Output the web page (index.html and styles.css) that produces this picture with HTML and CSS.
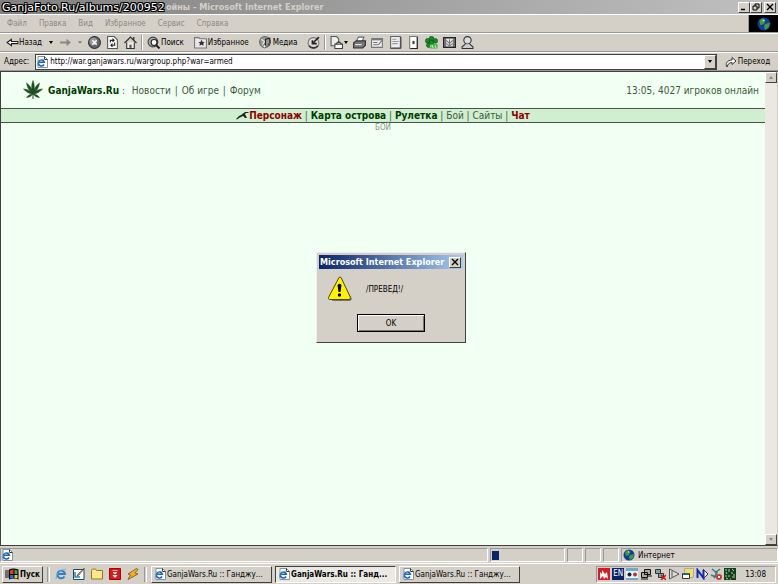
FILE: index.html
```html
<!DOCTYPE html>
<html lang="ru">
<head>
    <meta charset="UTF-8">
    <meta name="viewport" content="width=device-width, initial-scale=1.0">
    <title>GanjaWars.Ru</title>
    <link rel="stylesheet" href="styles.css">
</head>
<body>
    <svg class="sprites" aria-hidden="true">
        <symbol id="ie" viewBox="0 0 12 12">
            <path d="M2 .5h6.500l3 3v8h-9.500z" fill="#fff" stroke="#8a9299"/>
            <path d="M8.500.5v3h3" fill="none" stroke="#333"/>
            <path d="M8 8.500a3 3 0 1 1 .3-2.200H3" fill="none" stroke="#1a62b8" stroke-width="1.600"/>
            <path d="M1 9.500Q3 3 9 3" fill="none" stroke="#49a0dd" stroke-width=".8"/>
        </symbol>
        <symbol id="globe" viewBox="0 0 12 12">
            <circle cx="6" cy="6" r="5.500" fill="#123f91"/>
            <path d="M2 3l3-2 2 2-1 3-3 1zM7 6l4-1-1 4-3 2-1-3z" fill="#3f9d48"/>
            <path d="M5 2l2 1-2 1z" fill="#c6dc8c"/>
        </symbol>
    </svg>
    <header class="chrome">
        <div class="titlebar">
            <span class="stamp">GanjaFoto.Ru/albums/200952</span>
            <span class="title">ойны - Microsoft Internet Explorer</span>
            <div class="winbtns">
                <button aria-label="Свернуть"><svg viewBox="0 0 10 8"><path d="M2 6.500h4" stroke="#000" stroke-width="1.500"/></svg></button>
                <button aria-label="Восстановить"><svg viewBox="0 0 10 8"><path d="M4 3V1h4v4H6M2 3h4v4H2z" fill="none" stroke="#000"/></svg></button>
                <button class="gap" aria-label="Закрыть"><svg viewBox="0 0 10 8"><path d="M2 1l6 6M8 1L2 7" stroke="#000" stroke-width="1.400"/></svg></button>
            </div>
        </div>
        <div class="menurow">
            <nav class="menu">
                <a href="#">Файл</a>
                <a href="#">Правка</a>
                <a href="#">Вид</a>
                <a href="#">Избранное</a>
                <a href="#">Сервис</a>
                <a href="#">Справка</a>
            </nav>
            <div class="throbber"><svg viewBox="0 0 12 12"><use href="#globe"/></svg></div>
        </div>
        <div class="toolbar">
            <button class="back"><svg viewBox="0 0 12 12"><path d="M1 6l4-3v2h6v2H5v2z" fill="#fff" stroke="#222"/></svg>Назад<i class="arrow"></i></button>
            <button class="forward" aria-label="Вперед"><svg viewBox="0 0 12 12"><path d="M11 6L7 2.500V5H1v2h6v2.500z" fill="#888"/></svg><i class="arrow off"></i></button>
            <button class="stop" aria-label="Остановить"><svg viewBox="0 0 12 12"><circle cx="6" cy="6" r="5.500" fill="#666" stroke="#333"/><circle cx="5" cy="5" r="3.500" fill="#999"/><path d="M4 4l4 4M8 4L4 8" stroke="#fff" stroke-width="1.300"/></svg></button>
            <button class="refresh" aria-label="Обновить"><svg viewBox="0 0 12 12"><path d="M1.500.5h6l3 3v8h-9z" fill="#fff" stroke="#555"/><path d="M4 6V4h3M6 2.500L7.500 4 6 5.500M8 6v2.500H5M6 7L4.500 8.500 6 10" fill="none" stroke="#222"/></svg></button>
            <button class="home" aria-label="Домой"><svg viewBox="0 0 12 12"><path d="M2.500 6v5.500h7V6" fill="#eee" stroke="#333"/><path d="M.5 6.500L6 1l5.500 5.500M9 1v3" fill="none" stroke="#333" stroke-width="1.200"/><path d="M5 8h2v3H5z" fill="#555"/></svg></button>
            <span class="sep"></span>
            <button class="find"><svg viewBox="0 0 12 12"><circle cx="5.500" cy="5.500" r="4.500" fill="#aaa" stroke="#444"/><circle cx="6.500" cy="6" r="2.700" fill="#fff" stroke="#222"/><path d="M8.500 8.500l3 3" stroke="#222" stroke-width="1.800"/></svg>Поиск</button>
            <button class="fav"><svg viewBox="0 0 12 12"><path d="M.5 1.500h4l1 1h6v8.500H.5z" fill="#e8e8e8" stroke="#777"/><path d="M7 3.500l1 2h2l-1.500 1.500.5 2-2-1-2 1 .5-2L4 5.500h2z" fill="#333"/></svg>Избранное</button>
            <button class="media"><svg viewBox="0 0 12 12"><circle cx="5.500" cy="5.500" r="5" fill="#999" stroke="#666"/><path d="M2 3l3 2-2 4" stroke="#eee" fill="none"/><path d="M6 9V3l4-1v5" fill="none" stroke="#222"/><circle cx="5" cy="9.500" r="1.500" fill="#eee" stroke="#333" stroke-width=".6"/><circle cx="9" cy="8" r="1.300" fill="#555"/></svg>Медиа</button>
            <button class="history" aria-label="Журнал"><svg viewBox="0 0 12 12"><circle cx="6" cy="6.500" r="5" fill="#ddd" stroke="#777"/><path d="M5 4v3h4M11 1L6 6" stroke="#222" stroke-width="1.500" fill="none"/><path d="M2 9a5 5 0 0 0 8 0" stroke="#333" fill="none" stroke-width="1.500"/></svg></button>
            <span class="sep"></span>
            <button class="mail" aria-label="Почта"><svg viewBox="0 0 12 12"><path d="M1 .5h5l2 2V9H1z" fill="#eee" stroke="#555"/><path d="M4.500 7.500h7v4h-7zM5 7.500L8 5l3 2.500" fill="#fff" stroke="#444"/></svg><i class="arrow"></i></button>
            <button class="tool" aria-label="Печать"><svg viewBox="0 0 12 12"><path d="M3 5l2-4h5L8.500 5z" fill="#fff" stroke="#666"/><path d="M.5 6.500L3 4.500h8.500v4L9 11H.5z" fill="#777" stroke="#333"/><path d="M2 8h6" stroke="#eee"/></svg></button>
            <button class="tool" aria-label="Правка"><svg viewBox="0 0 12 12"><path d="M.5 2.500h10v8H.5z" fill="#eee" stroke="#777"/><path d="M1 3h10" stroke="#777" stroke-width="2"/><path d="M2 6h4M2 8h5M11 3L7 8" stroke="#777"/></svg></button>
            <button class="tool" aria-label="Обсуждение"><svg viewBox="0 0 12 12"><path d="M1.500.5h9v11h-9z" fill="#eee" stroke="#666"/><path d="M3 3h4M3 5h6M3 7h5" fill="none" stroke="#999"/><path d="M2 11h9V1" fill="none" stroke="#444"/></svg></button>
            <button class="tool" aria-label="Словарь"><svg viewBox="0 0 12 12"><path d="M2.500.5h7v11h-7z" fill="#fff" stroke="#777"/><path d="M9.500 1v10.500h-6" fill="none" stroke="#222"/><path d="M5 4.500h2v3H5z" fill="#444"/></svg></button>
            <button class="tool" aria-label="ICQ"><svg viewBox="0 0 12 12"><g fill="#168a25" stroke="#064b0c" stroke-width=".5"><circle cx="6" cy="2.500" r="2.200"/><circle cx="2.500" cy="4.500" r="2.200"/><circle cx="9.500" cy="4.500" r="2.200"/><circle cx="3.500" cy="8.500" r="2.200"/><circle cx="6" cy="6" r="2.200"/></g><path d="M4.500 7.500h7v4h-7z" fill="#3fae3a"/><path d="M5.500 8.500v2M7 8.500v2h1M9.500 8.500v2h1" stroke="#fff" stroke-width=".7" fill="none"/></svg></button>
            <button class="tool" aria-label="Справочник"><svg viewBox="0 0 12 12"><path d="M.5 1.500h11v9H.5z" fill="#777" stroke="#222"/><path d="M3 2.500h6v7H3z" fill="#eee"/><path d="M3 4l3 3 3-3M3 7l3 2 3-2M6 3v5" stroke="#777" fill="none"/></svg></button>
            <button class="tool" aria-label="Messenger"><svg viewBox="0 0 12 12"><circle cx="6" cy="4" r="3.400" fill="#ddd" stroke="#333"/><path d="M4 7.500L1 10v1.500h10V10L8 7.500" fill="#ccc" stroke="#333"/></svg></button>
        </div>
        <form class="address" onsubmit="return false">
            <label for="url">Адрес:</label>
            <div class="urlbox">
                <svg class="ic" viewBox="0 0 12 12"><use href="#ie"/></svg>
                <input id="url" type="text" value="http://war.ganjawars.ru/wargroup.php?war=armed">
                <button type="button" class="drop" aria-label="Список адресов"><i class="arrow"></i></button>
            </div>
            <button class="go"><svg viewBox="0 0 12 12"><path d="M2 11C0 8 2 4 7 4V1.500L11 5 7 8.500V6.500C4 6.500 3 8 2 11z" fill="#fff" stroke="#333"/></svg>Переход</button>
        </form>
    </header>
    <div class="view">
        <main class="page">
            <div class="head">
                <svg class="leaf" viewBox="0 0 20 20"><path d="M10 14C8 9 8.500 4 10 .5c1.500 3.500 2 8.500 0 13.500C6 11 4 7 3.500 3 7 5.500 9.500 9 10 14c.5-5 3-8.500 6.500-11C16 7 14 11 10 14 7 14 3 12 .5 9 4 9 8 11 10 14c2-3 6-5 9.500-5-2.500 3-6.500 5-9.500 5-2 2.500-4 3.500-6.500 3.500C5 15.500 7 14 10 14c3 0 5 1.500 6.500 3.500-2.500 0-4.500-1-6.500-3.500z" fill="#1d4f22" stroke="#1d4f22" stroke-width=".5"/><path d="M10 13v6" stroke="#1d4f22"/></svg>
                <div class="links"><a href="#"><b>GanjaWars.Ru</b></a> :&nbsp; <a href="#">Новости</a> | <a href="#">Об игре</a> | <a href="#">Форум</a></div>
                <div class="online">13:05, 4027 игроков онлайн</div>
            </div>
            <nav class="gamenav">
                <svg class="gun" viewBox="0 0 13 9"><path d="M0 8l3-3 2-1 4-3h4l-1 1h-2L9 3l2 4H9L7 5 5 6l-2 1-2 1.500z" fill="#1b2b1b"/></svg>
                <div><a class="red" href="#">Персонаж</a> | <a class="bold" href="#">Карта острова</a> | <a class="bold" href="#">Рулетка</a> | <a href="#">Бой</a> | <a href="#">Сайты</a> | <a class="red" href="#">Чат</a></div>
            </nav>
            <p class="battle">БОЙ</p>
        </main>
        <div class="scroll">
            <button aria-label="Вверх"><i class="arrow up off"></i></button>
            <button aria-label="Вниз"><i class="arrow off"></i></button>
        </div>
        <div class="dialog" role="alertdialog" aria-labelledby="dlg">
            <div class="dlgtitle"><span id="dlg">Microsoft Internet Explorer</span><button aria-label="Закрыть"><svg viewBox="0 0 10 8"><path d="M2 1l6 6M8 1L2 7" stroke="#000" stroke-width="1.400"/></svg></button></div>
            <div class="msg">
                <svg viewBox="0 0 26 26"><path d="M14 3l11 20-2 2H5z" fill="#77736e"/><path d="M12 1.500q1-1 2 0l9.500 20q0 2-1.500 2H2.500Q1 23 1.500 21.500z" fill="#fff200" stroke="#4d4a00"/><path d="M10.500 9q2-2.500 4 0l-1 7h-2z"/><circle cx="12.500" cy="19" r="1.700"/></svg>
                <span>/ПРЕВЕД!/</span>
            </div>
            <button class="ok">OK</button>
        </div>
    </div>
    <footer>
        <div class="status">
            <div class="cell main"><svg class="ic" viewBox="0 0 12 12"><use href="#ie"/></svg></div>
            <div class="cell progress"><i></i></div>
            <div class="cell small"></div>
            <div class="cell small"></div>
            <div class="cell small"></div>
            <div class="cell zone"><svg class="ic" viewBox="0 0 12 12"><use href="#globe"/></svg>Интернет</div>
        </div>
        <div class="taskbar">
            <button class="start"><svg viewBox="0 0 14 12"><path d="M0 3h2M0 5h2M0 7h2M0 9h2M3 2v8" stroke="#111"/><path d="M4 1.500q4-2 9.500 0v10q-5-2-9.500 0z"/><path d="M5 2.500q2-1 3.500-1V6H5z" fill="#e33"/><path d="M9.500 1.500l3 1V6h-3z" fill="#3a4"/><path d="M5 7h3.500v3L5 10.500z" fill="#36c"/><path d="M9.500 7h3v3.500l-3-.5z" fill="#ec3"/></svg>Пуск</button>
            <span class="grip"></span>
            <div class="quick">
                <button aria-label="Internet Explorer"><svg viewBox="0 0 12 12"><path d="M9.500 8.500a3.800 3.800 0 1 1 .5-2.500H3" fill="none" stroke="#2a82cb" stroke-width="2"/><path d="M1 11Q1 3 11 1" fill="none" stroke="#62b4e6"/></svg></button>
                <button aria-label="Рабочий стол"><svg viewBox="0 0 12 12"><path d="M.5 1.500h10.500v10H.5z" fill="#fff" stroke="#164b6c"/><path d="M2 4v5h5" fill="none" stroke="#2387b5" stroke-width="1.500"/><path d="M11.500 0L6 7l-2 1 1-2z" fill="#d8b34d" stroke="#333" stroke-width=".6"/></svg></button>
                <button aria-label="Папка"><svg viewBox="0 0 12 12"><path d="M.5 2.500L1.500 1h3l1 1.500h6v8.500H.5z" fill="#ffe787" stroke="#8b7a31"/></svg></button>
                <button aria-label="Загрузки"><svg viewBox="0 0 12 12"><path d="M.5.5h11v11H.5z" fill="#d81818" stroke="#a00"/><path d="M3.500 2.500h5M4 4.500h4L6 6zM4 7.500h4L6 9.500z" fill="#fff" stroke="#fff" stroke-width=".7"/></svg></button>
                <button aria-label="Winamp"><svg viewBox="0 0 12 12"><path d="M9.500.5L1 6l2.500 1L1 11.500 11 6 8 5l3-3.500z" fill="#f1ad25" stroke="#765011" stroke-width=".8"/></svg></button>
            </div>
            <span class="grip"></span>
            <div class="tasks">
                <button><svg class="ic" viewBox="0 0 12 12"><use href="#ie"/></svg>GanjaWars.Ru :: Ганджу...</button>
                <button class="active"><svg class="ic" viewBox="0 0 12 12"><use href="#ie"/></svg>GanjaWars.Ru :: Ганд...</button>
                <button><svg class="ic" viewBox="0 0 12 12"><use href="#ie"/></svg>GanjaWars.Ru :: Ганджу...</button>
            </div>
            <div class="tray">
                <svg viewBox="0 0 12 12"><path d="M0 0h12v12H0z" fill="#d51c22"/><path d="M2 11V4l2 2V2l3 4 2-2 1 7-2-2-2 2-1-3z" fill="#fff"/></svg>
                <span class="lang">EN</span>
                <svg viewBox="0 0 12 12"><path d="M0 0h12v12H0z" fill="#e8f3f8"/><path d="M0 0h12v3H0zM0 10h12v2H0z" fill="#72a9cf"/><circle cx="3.500" cy="6.500" r="2" fill="#124"/><circle cx="9" cy="6.500" r="2" fill="#b33"/></svg>
                <svg viewBox="0 0 12 12"><path d="M4.500 1.500h6v5h-6zM1.500 4.500h6v5h-6z" fill="#aaa" stroke="#111"/><path d="M1 11h7M8 8h4" stroke="#111"/></svg>
                <svg viewBox="0 0 12 12"><path d="M1.500 1.500h5v4h-5zM4.500 5.500h5v4h-5z" fill="#71a9a5" stroke="#333"/><path d="M7 7l5 5M12 7l-5 5" stroke="#d11" stroke-width="1.500"/></svg>
                <svg viewBox="0 0 12 12"><path d="M1.500 1l9.500 5-9.500 5zM4 3v6" fill="#ddd" stroke="#555"/></svg>
                <svg viewBox="0 0 12 12"><path d="M2.500.5h9v9h-9z" fill="#f7df52" stroke="#aaa"/><path d="M.5 5.500h7v5h-7z" fill="#fff" stroke="#333"/><path d="M1 6h6" stroke="#1763b8" stroke-width="2"/></svg>
                <svg viewBox="0 0 12 12"><path d="M7 1l5 5-5 5" fill="#eee" stroke="#333"/><path d="M1.500 10V2l6 8V2" fill="none" stroke="#1428b6" stroke-width="2"/></svg>
                <svg viewBox="0 0 12 12"><path d="M2 1l5 4-3 5M10 1L5 5M1 7l5 2" fill="none" stroke="#397a80" stroke-width="1.500"/><circle cx="9" cy="9" r="3" fill="#d43535"/><path d="M8 8l2 2M10 8l-2 2" stroke="#fff"/></svg>
                <svg viewBox="0 0 12 12"><path d="M0 0h12v12H0z" fill="#163d20"/><path d="M1 2h2M5 1v3M8 1l2 2M2 4l1 2M7 5h2M10 6v2M1 8h2M5 7v2M8 9h3M2 10l2 1M6 11h1" stroke="#8ee198"/></svg>
                <time>13:08</time>
            </div>
        </div>
    </footer>
</body>
</html>
```
FILE: styles.css
```css
* {
    box-sizing: border-box;
}
body {
    margin: 0;
    height: 100vh;
    display: flex;
    flex-direction: column;
    overflow: hidden;
    background: #d4d0c8;
    color: #000;
    font: 8px "DejaVu Sans Condensed", Tahoma, sans-serif;
}
a {
    color: inherit;
    text-decoration: none;
}
button {
    display: flex;
    align-items: center;
    justify-content: center;
    padding: 0;
    border: none;
    background: none;
    color: inherit;
    font: inherit;
    white-space: nowrap;
}
svg {
    display: block;
    width: 12px;
    height: 12px;
    flex: none;
}
.sprites {
    position: absolute;
    width: 0;
    height: 0;
}
.titlebar {
    height: 14px;
    display: flex;
    align-items: center;
    background: linear-gradient(90deg, #808080, #c0c0c0);
}
.stamp {
    padding-left: 2px;
    width: 166px;
    color: #fff;
    font: 11px "DejaVu Sans", Verdana, sans-serif;
    text-shadow: 1px 0 #000, -1px 0 #000, 0 1px #000, 0 -1px #000, 1px 1px #000, -1px -1px #000, 1px -1px #000, -1px 1px #000;
    white-space: nowrap;
}
.title {
    flex: 1;
    color: #d4d0c8;
    font-size: 9px;
    font-weight: bold;
}
.winbtns {
    display: flex;
    padding-right: 2px;
}
.winbtns button, .dlgtitle button, .scroll button, .drop {
    width: 12px;
    height: 11px;
    background: #d4d0c8;
    border: 1px solid;
    border-color: #fff #404040 #404040 #fff;
}
.winbtns svg, .dlgtitle svg {
    width: 10px;
    height: 8px;
}
.winbtns .gap {
    margin-left: 2px;
}
.menurow {
    height: 19px;
    display: flex;
    border-top: 1px solid #fff;
    border-bottom: 1px solid #999;
}
.menu {
    flex: 1;
    display: flex;
    align-items: center;
    gap: 12px;
    padding-left: 7px;
    color: #8d8982;
    border-right: 1px solid #999;
}
.throbber {
    width: 29px;
    display: flex;
    align-items: center;
    justify-content: center;
    background: #000;
}
.throbber svg {
    width: 14px;
    height: 14px;
}
.toolbar {
    height: 19px;
    display: flex;
    align-items: center;
    padding-left: 6px;
    border-top: 1px solid #fff;
    border-bottom: 1px solid #999;
}
.toolbar svg {
    width: 13px;
    height: 13px;
}
.arrow {
    border: 2px solid transparent;
    border-top: 3px solid #000;
    border-bottom: none;
}
.arrow.off {
    border-top-color: #888;
}
.arrow.up {
    border-top: none;
    border-bottom: 3px solid #888;
}
.back .arrow {
    margin-left: 7px;
}
.forward {
    margin-left: 6px;
    gap: 6px;
}
.stop {
    margin-left: 6px;
}
.refresh, .home {
    margin-left: 5px;
}
.sep {
    width: 2px;
    height: 15px;
    margin: 0 4px;
    border-left: 1px solid #999;
    border-right: 1px solid #fff;
}
.find, .fav, .media {
    gap: 1px;
}
.fav, .media, .history {
    margin-left: 10px;
}
.mail {
    gap: 1px;
}
.tool {
    margin-left: 5px;
}
.address {
    height: 19px;
    display: flex;
    align-items: center;
    padding-left: 4px;
    border-top: 1px solid #fff;
    border-bottom: 1px solid #999;
}
.urlbox {
    flex: 1;
    height: 16px;
    display: flex;
    align-items: center;
    margin-left: 6px;
    background: #fff;
    border: 1px solid #404040;
}
.urlbox input {
    flex: 1;
    min-width: 0;
    padding: 0 2px;
    border: none;
    outline: none;
    background: none;
    font: inherit;
}
.drop {
    height: 14px;
}
.go {
    width: 61px;
    gap: 1px;
}
.view {
    flex: 1;
    min-height: 0;
    position: relative;
    display: flex;
    border: 1px solid #404040;
    border-right: 1px solid #d4d0c8;
}
.page {
    flex: 1;
    background: #f2fff3;
    color: #3c5c3c;
    font: 10px "DejaVu Sans Condensed", Verdana, sans-serif;
}
.head {
    height: 36px;
    display: flex;
    align-items: center;
    padding: 0 6px 0 22px;
}
.leaf {
    width: 20px;
    height: 20px;
}
.links {
    flex: 1;
    margin-left: 5px;
}
.links a + a {
    padding: 0 1px;
}
.links b, .gamenav .bold {
    color: #003c00;
    font-weight: bold;
}
.gamenav {
    height: 15px;
    display: flex;
    align-items: center;
    justify-content: center;
    background: #d0eed0;
    border-top: 1px solid #445544;
    border-bottom: 1px solid #445544;
}
.gun {
    width: 13px;
    height: 9px;
}
.gamenav .red {
    color: #900000;
    font-weight: bold;
}
.battle {
    margin: 0;
    text-align: center;
    color: #8a988a;
    font-size: 8px;
    line-height: 10px;
}
.scroll {
    width: 12px;
    display: flex;
    flex-direction: column;
    justify-content: space-between;
    background: #eae8e3;
}
.dialog {
    position: absolute;
    left: 315px;
    top: 180px;
    width: 150px;
    height: 91px;
    padding: 2px;
    background: #d4d0c8;
    border: 1px solid;
    border-color: #eee #404040 #404040 #eee;
}
.dlgtitle {
    height: 14px;
    display: flex;
    align-items: center;
    justify-content: space-between;
    padding: 0 2px 0 1px;
    background: linear-gradient(90deg, #0a246a, #a6caf0);
    color: #fff;
    font-size: 9px;
    font-weight: bold;
    white-space: nowrap;
}
.msg {
    display: flex;
    align-items: center;
    gap: 13px;
    padding: 7px 8px;
}
.msg svg {
    width: 26px;
    height: 26px;
}
.ok {
    width: 68px;
    height: 18px;
    margin: 5px auto 0;
    border: 1px solid #000;
    box-shadow: inset 1px 1px #fff, inset -1px -1px #777;
}
.status {
    height: 17px;
    display: flex;
    gap: 2px;
    padding: 2px 0 1px;
}
.cell {
    display: flex;
    align-items: center;
    border: 1px solid;
    border-color: #999 #fff #fff #999;
}
.cell.main {
    flex: 1;
}
.progress {
    width: 75px;
    padding-left: 1px;
}
.progress i {
    width: 7px;
    height: 9px;
    background: #0a246a;
}
.small {
    width: 16px;
}
.zone {
    width: 157px;
    gap: 3px;
    padding-left: 1px;
}
.taskbar {
    height: 21px;
    display: flex;
    align-items: center;
    padding: 1px 2px;
    border-top: 1px solid #fff;
}
.start {
    width: 41px;
    height: 17px;
    gap: 1px;
    font-weight: bold;
}
.start, .tasks button {
    border: 1px solid;
    border-color: #fff #404040 #404040 #fff;
}
.start svg {
    width: 14px;
}
.grip {
    width: 3px;
    height: 15px;
    margin: 0 4px;
    border-left: 1px solid #999;
    border-right: 1px solid #fff;
}
.quick {
    display: flex;
    gap: 6px;
    padding: 0 1px;
}
.tasks {
    flex: 1;
    display: flex;
    gap: 3px;
}
.tasks button {
    width: 121px;
    height: 17px;
    justify-content: flex-start;
    gap: 1px;
    padding-left: 2px;
    overflow: hidden;
}
.tasks .active {
    font-weight: bold;
    background: #ebe9e4;
    border-color: #404040 #fff #fff #404040;
}
.tray {
    height: 17px;
    display: flex;
    align-items: center;
    gap: 2px;
    padding: 0 9px 0 1px;
    border: 1px solid;
    border-color: #999 #fff #fff #999;
}
.lang {
    width: 12px;
    background: #0a246a;
    color: #fff;
    line-height: 12px;
    text-align: center;
}
.tray time {
    margin-left: 7px;
}
```
